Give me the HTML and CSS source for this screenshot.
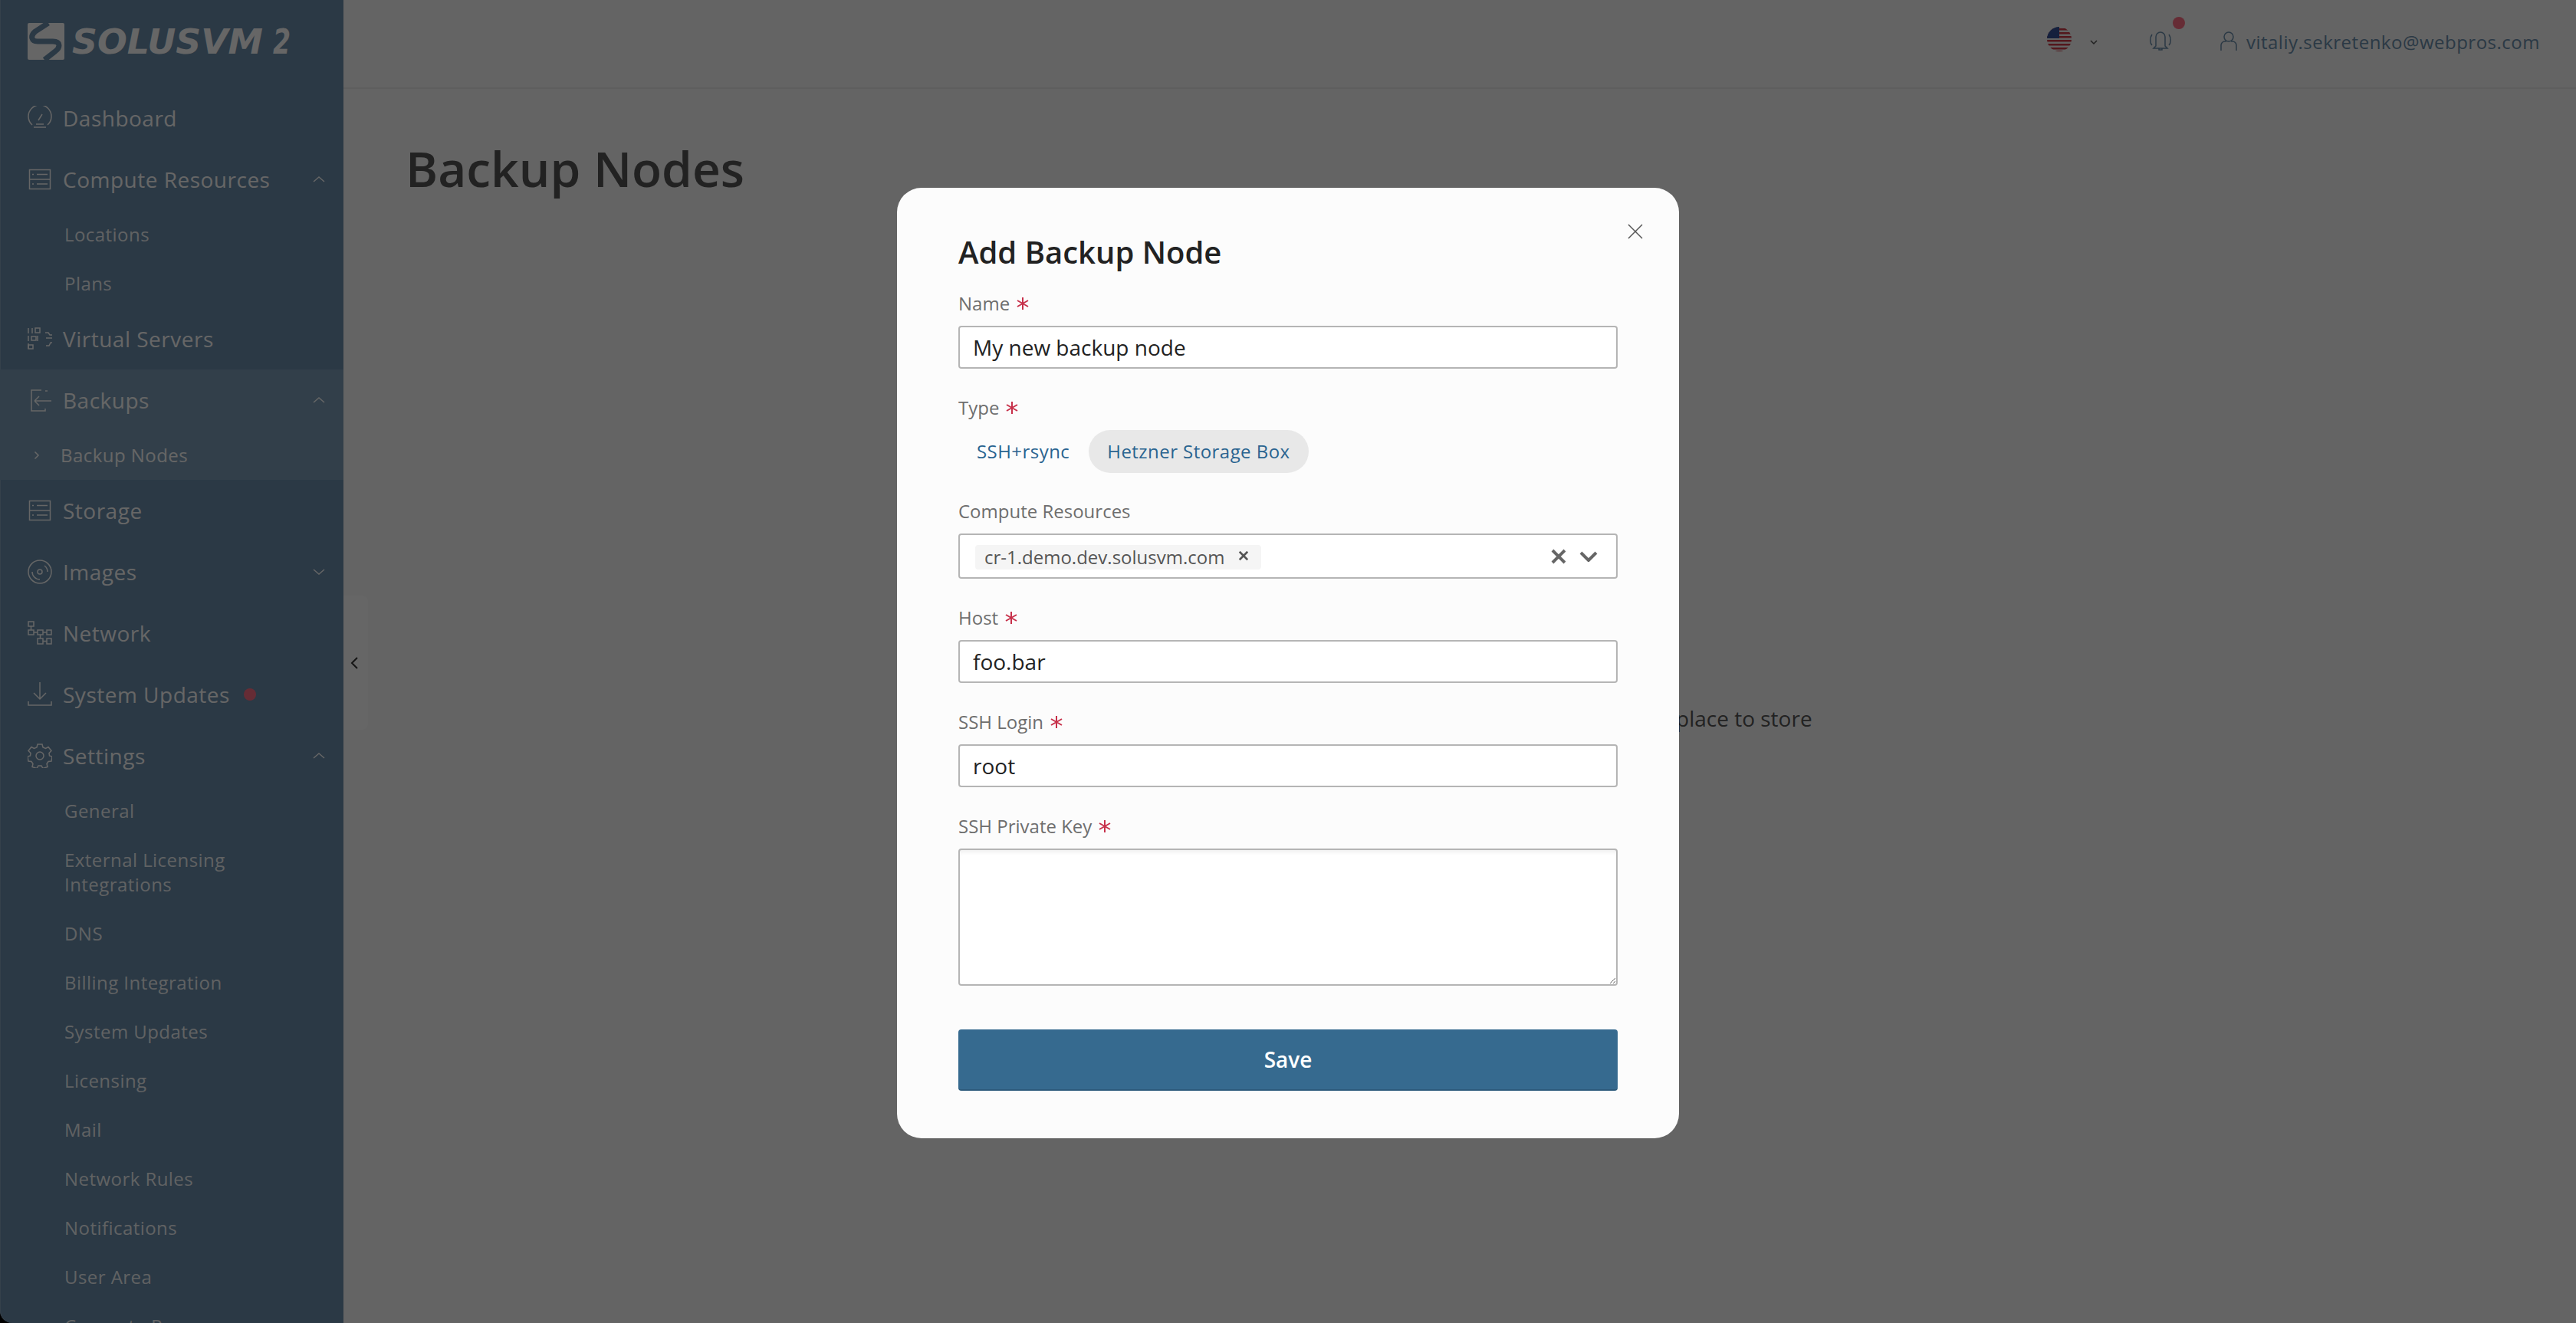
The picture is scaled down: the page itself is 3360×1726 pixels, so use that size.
FILE: index.html
```html
<!DOCTYPE html>
<html lang="en">
<head>
<meta charset="utf-8">
<title>Backup Nodes - SolusVM 2</title>
<link rel="stylesheet" href="styles.css">
</head>
<body>
<div class="app">
  <aside class="sidebar">
    <div class="logo">
      <svg class="logo-svg" viewBox="0 0 360 60" width="360" height="60">
        <rect class="logo-box" width="48" height="48" rx="2"/>
        <path class="logo-s" d="M27 0L10 11C3 17 5 24 13 24L33 24C43 24 43 32 36 37L22 48"/>
        <text class="logo-text" x="58" y="40" textLength="249" lengthAdjust="spacingAndGlyphs">SOLUSVM</text>
        <text class="logo-text" x="320" y="40" textLength="23" lengthAdjust="spacingAndGlyphs">2</text>
      </svg>
    </div>
    <nav class="nav">
      <a class="item"><svg class="ico" viewBox="0 0 32 32"><path d="M6 25a15 15 0 1 1 20 0"/><path d="M14 19l5-8M11 24h10M8 28h16"/></svg><span>Dashboard</span></a>
      <a class="item"><svg class="ico" viewBox="0 0 32 32"><rect x="2.500" y="3.500" width="27" height="25"/><path d="M2.500 16h27M12 9.500h14M12 22h14M6 9.500h2M6 22h2"/></svg><span>Compute Resources</span><svg class="chev" viewBox="0 0 16 10"><path d="M1 8l7-6 7 6"/></svg></a>
      <a class="sub">Locations</a>
      <a class="sub">Plans</a>
      <a class="item"><svg class="ico" viewBox="0 0 32 32"><path d="M1 2v7M6 2v7M1 22v7M23 8h4l2 3h3M24 15h8M24 25h4l2-4h2M13 12v7M1 12v7"/><rect x="10" y="2" width="6" height="6"/><rect x="5" y="13" width="6" height="5"/><rect x="1" y="24" width="6" height="5"/></svg><span>Virtual Servers</span></a>
      <div class="group-active">
        <a class="item"><svg class="ico" viewBox="0 0 32 32"><path d="M18 3H5v27h18v-3M26 4h-3M31 17H9M9 17l6-6M9 17l6 6"/></svg><span>Backups</span><svg class="chev" viewBox="0 0 16 10"><path d="M1 8l7-6 7 6"/></svg></a>
        <a class="sub sub-active"><svg class="mini" viewBox="0 0 8 12"><path d="M1.500 1.500l4.500 4.500-4.500 4.500"/></svg>Backup Nodes</a>
      </div>
      <a class="item"><svg class="ico" viewBox="0 0 32 32"><rect x="2.500" y="3.500" width="27" height="25"/><path d="M2.500 16h27M12 9.500h14M12 22h14M6 9.500h2M6 22h2"/></svg><span>Storage</span></a>
      <a class="item"><svg class="ico" viewBox="0 0 32 32"><circle cx="16" cy="16" r="15"/><circle cx="16" cy="16" r="3"/><path d="M6 16a10 10 0 0 0 10 10M26 16A10 10 0 0 0 22 8"/></svg><span>Images</span><svg class="chev" viewBox="0 0 16 10"><path d="M1 2l7 6 7-6"/></svg></a>
      <a class="item"><svg class="ico" viewBox="0 0 32 32"><rect x="1" y="1" width="7" height="6"/><rect x="1" y="12" width="7" height="6"/><rect x="13" y="12" width="7" height="6"/><rect x="25" y="12" width="6" height="6"/><rect x="13" y="23" width="7" height="7"/><rect x="25" y="23" width="6" height="7"/><path d="M4.500 7v5M8 15h5M20 15h5M16.500 18v5M20 26.500h5"/></svg><span>Network</span></a>
      <a class="item"><svg class="ico" viewBox="0 0 32 32"><path d="M16 0v22M8 14l8 8 8-8M1 25v5h30v-5"/></svg><span>System Updates</span><i class="dot"></i></a>
      <a class="item"><svg class="ico" viewBox="0 0 32 32"><circle cx="16" cy="16" r="5"/><path d="M13 1h6l1 4 3.500 1.500L27 4.500l4 5-3 3 .5 3.500 3.500 1-1 6-4 .5-2 3 1 4-6 2-2-3.500h-4l-2 3.500-6-2 1-4-2-3-4-.5-1-6 3.500-1 .5-3.500-3-3 4-5 3.500 2L12 5z"/></svg><span>Settings</span><svg class="chev" viewBox="0 0 16 10"><path d="M1 8l7-6 7 6"/></svg></a>
      <a class="sub">General</a>
      <a class="sub">External Licensing Integrations</a>
      <a class="sub">DNS</a>
      <a class="sub">Billing Integration</a>
      <a class="sub">System Updates</a>
      <a class="sub">Licensing</a>
      <a class="sub">Mail</a>
      <a class="sub">Network Rules</a>
      <a class="sub">Notifications</a>
      <a class="sub">User Area</a>
      <a class="sub">Compute Resources</a>
    </nav>
  </aside>
  <div class="handle"><svg viewBox="0 0 10 16"><path d="M9 1L2 8l7 7"/></svg></div>
  <main class="main">
    <header class="topbar">
      <svg class="flag" viewBox="0 0 32 32"><defs><clipPath id="fc"><circle cx="16" cy="16" r="16"/></clipPath></defs><g clip-path="url(#fc)"><rect width="32" height="32" fill="#f4f4f4"/><path fill="#d03a46" d="M0 2h32v2.500H0zM0 7h32v2.500H0zM0 12h32v2.500H0zM0 17h32v2.500H0zM0 22h32v2.500H0zM0 27h32v2.500H0zM0 31h32v2H0z"/><rect width="16" height="15" fill="#35509a"/></g></svg>
      <svg class="flag-chev" viewBox="0 0 10 6"><path d="M1 1l4 4 4-4"/></svg>
      <span class="bell"><svg viewBox="0 0 32 28"><path d="M10 21V9a6 6 0 0 1 12 0v12l3 3H7zM14 24v2h4v-2M5 6C2 10 2 17 5 20M27 6c3 4 3 11 0 14"/></svg><i class="bell-dot"></i></span>
      <svg class="user" viewBox="0 0 22 26"><circle cx="11" cy="7" r="6"/><path d="M1 25v-7a5 5 0 0 1 5-5h2M21 25v-7a5 5 0 0 0-5-5h-2"/></svg>
      <span class="email">vitaliy.sekretenko@webpros.com</span>
    </header>
    <div class="content">
      <h1 class="page-title">Backup Nodes</h1>
      <p class="empty">place to store</p>
    </div>
  </main>
</div>
<div class="overlay">
  <form class="modal">
    <svg class="close" viewBox="0 0 20 20"><path d="M1 1l18 18M19 1L1 19"/></svg>
    <h2 class="modal-title">Add Backup Node</h2>
    <label class="label">Name<svg class="req" viewBox="0 0 16 16"><path d="M8 0v16M1 4l14 8M15 4L1 12"/></svg></label>
    <input class="input" value="My new backup node">
    <label class="label gap">Type<svg class="req" viewBox="0 0 16 16"><path d="M8 0v16M1 4l14 8M15 4L1 12"/></svg></label>
    <div class="chips"><span class="chip">SSH+rsync</span><span class="chip chip-on">Hetzner Storage Box</span></div>
    <label class="label gap-chip">Compute Resources</label>
    <div class="select">
      <span class="tag"><span class="tag-text">cr-1.demo.dev.solusvm.com</span><svg viewBox="0 0 12 12"><path d="M1.500 1.500l9 9M10.500 1.500l-9 9"/></svg></span>
      <svg class="sel-x" viewBox="0 0 20 20"><path d="M2 2l16 16M18 2L2 18"/></svg>
      <svg class="sel-chev" viewBox="0 0 24 14"><path d="M2 2l10 10L22 2"/></svg>
    </div>
    <label class="label gap">Host<svg class="req" viewBox="0 0 16 16"><path d="M8 0v16M1 4l14 8M15 4L1 12"/></svg></label>
    <input class="input" value="foo.bar">
    <label class="label gap">SSH Login<svg class="req" viewBox="0 0 16 16"><path d="M8 0v16M1 4l14 8M15 4L1 12"/></svg></label>
    <input class="input" value="root">
    <label class="label gap">SSH Private Key<svg class="req" viewBox="0 0 16 16"><path d="M8 0v16M1 4l14 8M15 4L1 12"/></svg></label>
    <textarea class="textarea"></textarea>
    <button class="save" type="button">Save</button>
  </form>
</div>
</body>
</html>
```
FILE: styles.css
```css
* { box-sizing: border-box; }
html, body { margin: 0; height: 100%; overflow: hidden; }
body { font-family: "Open Sans", "Liberation Sans", sans-serif; background: #000; color: #555; }
svg { display: block; fill: none; stroke: currentColor; }

.app { display: flex; height: 1726px; }
.sidebar { width: 448px; flex: none; height: 1726px; overflow: hidden; background: #6b8eac; color: #fff; border-bottom-left-radius: 16px; box-shadow: inset 1px 0 0 #85a2bb; }
.logo { height: 114px; padding: 30px 0 0 36px; }
.logo-box { fill: #fff; stroke: none; }
.logo-s { stroke: #6b8eac; stroke-width: 7; }
.logo-text { font: italic 700 44px "DejaVu Sans", sans-serif; fill: #fff; stroke: none; }

.nav { display: flex; flex-direction: column; }
.item { height: 80px; display: flex; align-items: center; padding: 0 24px 0 36px; font-size: 28px; font-weight: 500; letter-spacing: .5px; }
.item span { margin-left: 14px; }
.ico { width: 32px; height: 32px; stroke-width: 1.500; flex: none; }
.chev { width: 16px; height: 10px; stroke-width: 1.500; margin-left: auto; }
.dot { width: 16px; height: 16px; border-radius: 50%; background: #ff6f85; margin-left: 18px; }
.sub { display: block; padding: 16px 60px 16px 84px; font-size: 24px; line-height: 32px; font-weight: 500; letter-spacing: .45px; color: rgba(255,255,255,.92); }
.group-active { background: #7e9fb9; }
.sub-active { display: flex; align-items: center; padding-left: 44px; color: #fff; }
.mini { width: 8px; height: 12px; stroke-width: 1.500; margin-right: 27px; }

.handle { position: absolute; left: 448px; top: 777px; width: 32px; height: 175px; background: #fff; border-radius: 0 8px 8px 0; display: flex; align-items: center; padding-left: 9px; color: #333; }
.handle svg { width: 10px; height: 16px; stroke-width: 2; }

.main { flex: 1; min-width: 0; background: #fafafa; }
.topbar { height: 116px; border-bottom: 2px solid #ececec; display: flex; align-items: flex-start; padding: 35px 47px 0 0; justify-content: flex-end; color: #6b8eac; }
.flag { width: 32px; height: 32px; stroke: none; }
.flag-chev { width: 10px; height: 6px; margin: 17px 66px 0 24px; color: #555; stroke-width: 1.500; }
.bell { position: relative; width: 32px; height: 28px; margin: 4px 62px 0 0; color: #6b8eac; }
.bell svg { width: 32px; height: 28px; stroke-width: 1.500; }
.bell-dot { position: absolute; left: 32px; top: -17px; width: 16px; height: 16px; border-radius: 50%; background: #ff6f85; }
.user { width: 22px; height: 26px; margin: 6px 12px 0 0; stroke-width: 1.500; }
.email { font-size: 24px; line-height: 40px; font-weight: 500; letter-spacing: .5px; color: #6b8eac; }

.content { padding: 0 0 0 81px; }
.page-title { margin: 60px 0 0; font-size: 64px; line-height: 88px; font-weight: 600; color: #555; }
.empty { margin: 0; padding: 0 0 0 1657px; font-size: 28px; line-height: 40px; color: #555; position: relative; top: 653px; }

.overlay { position: absolute; inset: 0; background: rgba(0,0,0,.6); display: flex; justify-content: center; align-items: flex-start; padding-top: 245px; }
.modal { position: relative; width: 1020px; height: 1240px; background: #fcfcfc; border-radius: 32px; padding: 60px 80px; display: flex; flex-direction: column; }
.close { position: absolute; right: 47px; top: 47px; width: 20px; height: 20px; color: #555; stroke-width: 1.500; }
.modal-title { margin: 0; font-size: 40px; line-height: 48px; font-weight: 600; color: #222; }
.label { display: flex; align-items: center; gap: 9px; margin-top: 27px; font-size: 24px; line-height: 32px; color: #6e6e6e; height: 32px; }
.label.gap { margin-top: 35px; }
.label.gap-chip { margin-top: 34px; }
.req { width: 16px; height: 16px; color: #c7304a; stroke-width: 2; }
.input { display: block; width: 860px; height: 56px; margin-top: 13px; padding: 0 17px; border: 2px solid #b5b5b5; border-radius: 4px; background: #fff; font: 400 28px "Open Sans", sans-serif; color: #222; outline: 0; }
.chips { display: flex; margin-top: 13px; height: 56px; }
.chip { display: flex; align-items: center; height: 56px; padding: 0 24px 2px; border-radius: 28px; font-size: 24px; font-weight: 500; letter-spacing: .45px; color: #2a6490; }
.chip-on { background: #e8e8e8; margin-left: 1px; }
.select { display: flex; align-items: center; margin-top: 13px; height: 59px; padding: 0 24px 0 20px; border: 2px solid #b5b5b5; border-radius: 4px; background: #fff; color: #666; }
.tag { display: flex; align-items: center; height: 32px; margin-top: 2px; padding: 0 16px 0 12px; background: #f5f5f5; border-radius: 4px; font-size: 24px; color: #555; }
.tag svg { width: 14px; height: 14px; margin-left: 18px; stroke-width: 2.200; margin-top: -4px; }
.sel-x { width: 20px; height: 20px; margin-left: auto; stroke-width: 4; }
.sel-chev { width: 24px; height: 14px; margin-left: 17px; stroke-width: 4; }
.textarea { display: block; width: 860px; height: 179px; margin-top: 13px; border: 2px solid #b5b5b5; border-radius: 4px; background: #fff; box-shadow: inset 0 6px 6px -4px rgba(0,0,0,.08); outline: 0; }
.save { display: block; width: 860px; height: 80px; margin-top: 57px; border: 0; border-bottom: 2px solid #2c5a7b; border-radius: 4px; background: #366a8f; color: #fff; font: 600 28px "Open Sans", sans-serif; }
```
